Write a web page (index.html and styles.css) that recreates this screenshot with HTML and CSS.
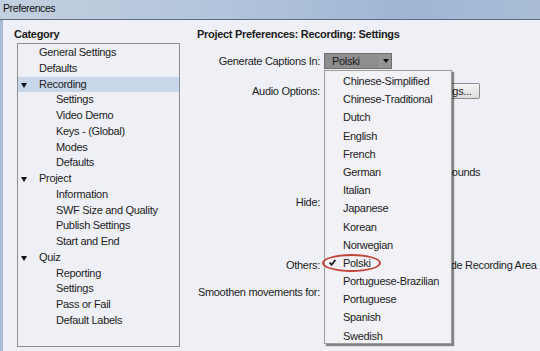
FILE: index.html
```html
<!DOCTYPE html>
<html>
<head>
<meta charset="utf-8">
<title>Preferences</title>
<link rel="stylesheet" href="styles.css">
</head>
<body>
<div class="window">
  <div class="titlebar">Preferences</div>
  <div class="frame">
    <aside class="category">
      <h2 class="heading">Category</h2>
      <ul class="tree">
        <li class="node">General Settings</li>
        <li class="node">Defaults</li>
        <li class="node open selected">Recording</li>
        <li class="node child">Settings</li>
        <li class="node child">Video Demo</li>
        <li class="node child">Keys - (Global)</li>
        <li class="node child">Modes</li>
        <li class="node child">Defaults</li>
        <li class="node open">Project</li>
        <li class="node child">Information</li>
        <li class="node child">SWF Size and Quality</li>
        <li class="node child">Publish Settings</li>
        <li class="node child">Start and End</li>
        <li class="node open">Quiz</li>
        <li class="node child">Reporting</li>
        <li class="node child">Settings</li>
        <li class="node child">Pass or Fail</li>
        <li class="node child">Default Labels</li>
      </ul>
    </aside>
    <section class="settings">
      <h2 class="title">Project Preferences: Recording: Settings</h2>
      <div class="form">
        <div class="row">
          <span class="label">Generate Captions In:</span>
          <div class="combo">
            <span class="combo-text">Polski</span>
            <span class="combo-arrow"></span>
            <ul class="dropdown">
              <li class="option">Chinese-Simplified</li>
              <li class="option">Chinese-Traditional</li>
              <li class="option">Dutch</li>
              <li class="option">English</li>
              <li class="option">French</li>
              <li class="option">German</li>
              <li class="option">Italian</li>
              <li class="option">Japanese</li>
              <li class="option">Korean</li>
              <li class="option">Norwegian</li>
              <li class="option checked">
                <svg class="check" width="7" height="7" viewBox="0 0 7 7"><path d="M0.6 3.6 L2.6 5.8 L6.4 0.9" fill="none" stroke="#111" stroke-width="1.6"/></svg>
                Polski
                <span class="ring"></span>
              </li>
              <li class="option">Portuguese-Brazilian</li>
              <li class="option">Portuguese</li>
              <li class="option">Spanish</li>
              <li class="option">Swedish</li>
            </ul>
          </div>
        </div>
        <div class="row row-audio">
          <span class="label">Audio Options:</span>
          <div class="plain-combo"></div>
          <button class="btn">Settings...</button>
        </div>
        <div class="row">
          <span class="label"></span>
          <span class="check-box"></span>
        </div>
        <div class="row">
          <span class="label"></span>
          <span class="check-box"></span>
        </div>
        <div class="row">
          <span class="label"></span>
          <span class="check-box"></span><span class="check-text shifted">Record Mouse Click Sounds</span>
        </div>
        <div class="row row-gap-md">
          <span class="label">Hide:</span>
          <span class="check-box"></span>
        </div>
        <div class="row">
          <span class="label"></span>
          <span class="check-box"></span>
        </div>
        <div class="row row-gap-lg">
          <span class="label">Others:</span>
          <span class="check-box"></span><span class="check-text">Move new windows inside Recording Area</span>
        </div>
        <div class="row">
          <span class="label">Smoothen movements for:</span>
          <span class="check-box"></span>
        </div>
      </div>
    </section>
  </div>
</div>
</body>
</html>
```
FILE: styles.css
```css
* {
  box-sizing: border-box;
  margin: 0;
  padding: 0;
}

html, body {
  width: 540px;
  height: 351px;
  overflow: hidden;
}

body {
  font-family: "Liberation Sans", Arial, sans-serif;
  font-size: 11px;
  letter-spacing: -0.3px;
  color: #1c1c1c;
  background: #eff0f5;
}

.window {
  height: 351px;
  display: flex;
  flex-direction: column;
}

.titlebar {
  height: 20px;
  padding-left: 3px;
  line-height: 17px;
  font-size: 10.5px;
  letter-spacing: -0.4px;
  color: #111;
  background: linear-gradient(90deg, #c3d0df, #b3c5dc 40%, #9fb6d3 75%, #a9bdd6);
  border-bottom: 1px solid #5a6c86;
}

.frame {
  flex: 1;
  display: flex;
  border-left: 3px solid #a8bbd4;
  background: #eff0f5;
}

/* left category tree */
.category {
  width: 177px;
  padding: 7px 0 0 11px;
}

.heading {
  font-size: 11px;
  font-weight: bold;
  line-height: 14px;
  margin-bottom: 2px;
}

.tree {
  list-style: none;
  margin-left: 3px;
  width: 163px;
  height: 304px;
  border: 1px solid #8e8e8e;
  padding-top: 1px;
}

.node {
  position: relative;
  height: 15.76px;
  line-height: 15.76px;
  padding-left: 21px;
  white-space: nowrap;
}

.node.child {
  padding-left: 38px;
}

.node.selected {
  background: #c9d7ea;
}

.node.open::before {
  content: "";
  position: absolute;
  left: 3px;
  top: 6px;
  border-left: 3px solid transparent;
  border-right: 3px solid transparent;
  border-top: 5px solid #111;
}

/* right settings */
.settings {
  flex: 1;
  margin-left: 14px;
  padding-top: 7px;
}

.title {
  font-size: 11px;
  font-weight: bold;
  line-height: 14px;
  padding-left: 3px;
}

.form {
  margin-top: 12px;
}

.row {
  display: flex;
  align-items: center;
  height: 16px;
  margin-top: 11px;
  white-space: nowrap;
}

.row:first-child {
  margin-top: 0;
}

.row-audio {
  height: 17px;
  margin-top: 13px;
}

.row-gap-md {
  margin-top: 14px;
}

.row-gap-lg {
  margin-top: 20px;
}

.label {
  width: 126px;
  flex: none;
  text-align: right;
  margin-right: 4px;
}

.combo {
  position: relative;
  display: flex;
  align-items: center;
  width: 68px;
  height: 16px;
  border: 1px solid #6e6e6e;
  background: #8e8e8e;
  padding-left: 7px;
  color: #1a1a1a;
}

.combo-text {
  flex: 1;
}

.combo-arrow {
  position: relative;
  width: 12px;
  height: 14px;
  border-left: 1px solid #9c9c9c;
  background: #949494;
}

.combo-arrow::after {
  content: "";
  position: absolute;
  left: 3px;
  top: 5px;
  border-left: 3px solid transparent;
  border-right: 3px solid transparent;
  border-top: 4px solid #111;
}

.dropdown {
  position: absolute;
  left: -1px;
  top: 16px;
  z-index: 5;
  list-style: none;
  width: 128px;
  height: 274px;
  border: 1px solid #9c9c9c;
  background: #f1f1f6;
  box-shadow: 2px 2px 1px rgba(0, 0, 0, 0.45);
  color: #1c1c1c;
  padding-top: 1px;
}

.option {
  position: relative;
  height: 18.2px;
  line-height: 18.2px;
  padding-left: 18px;
}

.check {
  position: absolute;
  left: 4px;
  top: 5px;
}

.ring {
  position: absolute;
  left: -3px;
  top: 0;
  width: 59px;
  height: 18px;
  border: 2px solid #c2433a;
  border-radius: 50%;
}

.plain-combo {
  width: 90px;
  height: 16px;
  border: 1px solid #8e8e8e;
  background: #f4f4f4;
  margin-right: 4px;
}

.btn {
  height: 16px;
  padding: 0 7px;
  font-family: inherit;
  font-size: 11px;
  letter-spacing: -0.3px;
  color: #1c1c1c;
  border: 1px solid #8c8c8c;
  border-radius: 2px;
  background: linear-gradient(#f5f5f5, #dedede);
  line-height: 14px;
}

.check-box {
  width: 13px;
  height: 13px;
  border: 1px solid #8e8f8f;
  background: #f7f7f7;
  margin-right: 5px;
  flex: none;
}

.check-text.shifted {
  margin-left: 7px;
}
```
